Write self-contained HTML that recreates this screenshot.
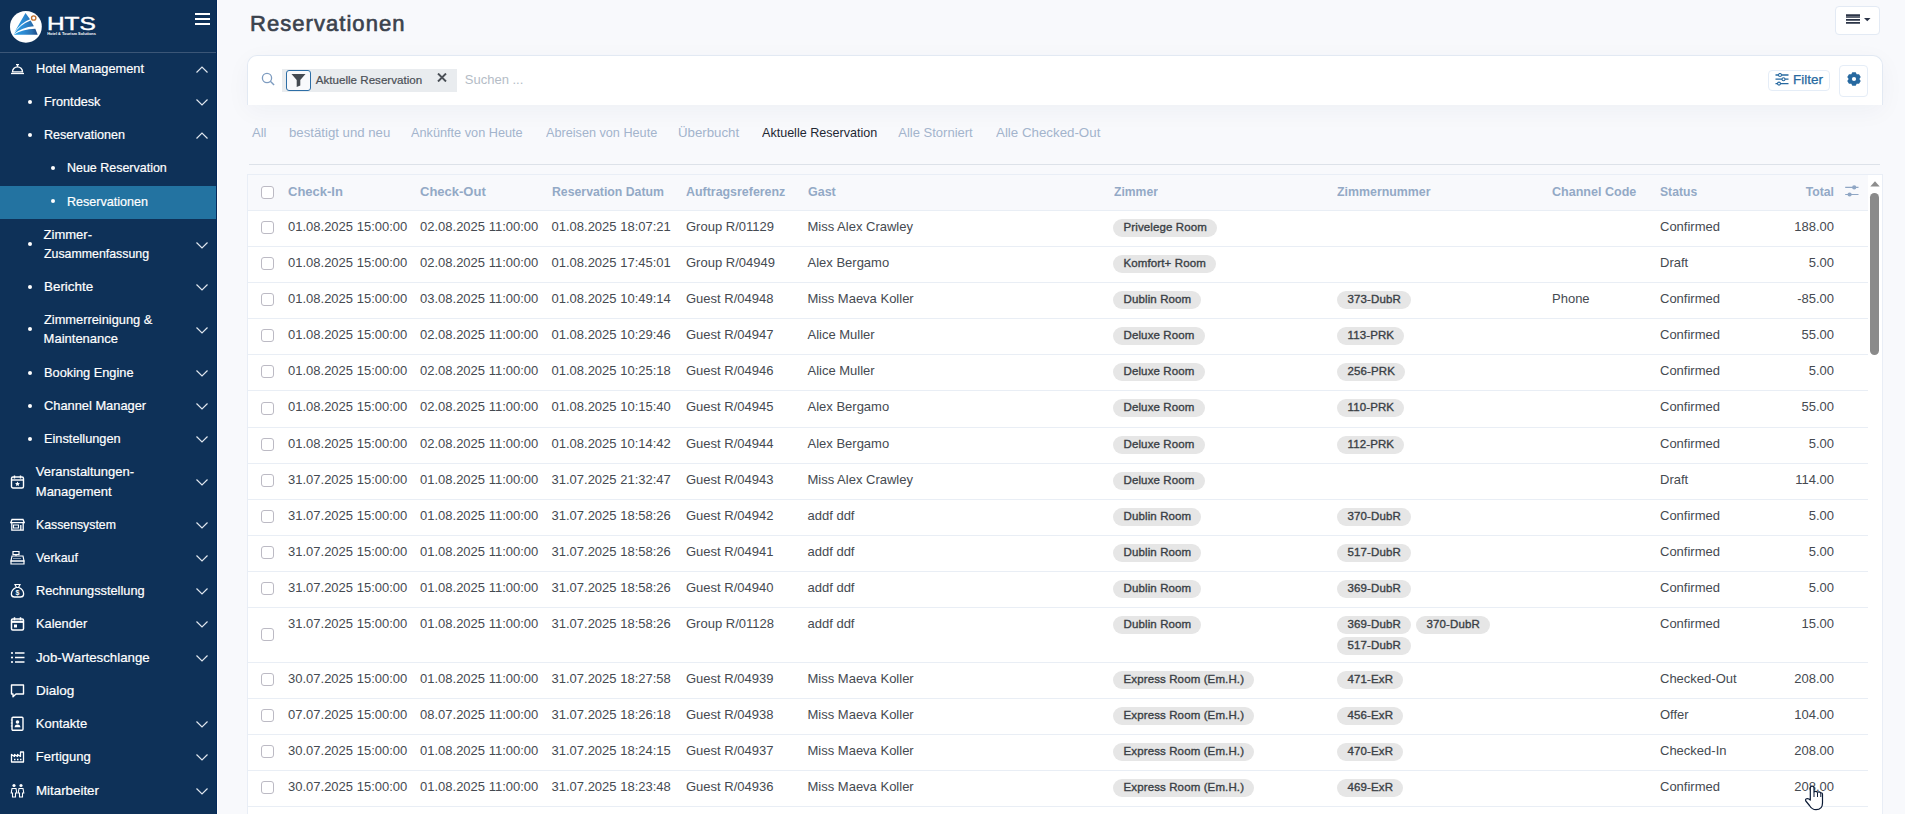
<!DOCTYPE html>
<html><head><meta charset="utf-8"><style>
*{box-sizing:border-box;margin:0;padding:0}
html,body{width:1905px;height:814px;overflow:hidden;background:#f8f9fc;font-family:"Liberation Sans",sans-serif}
.ab{position:absolute}
.t{white-space:nowrap;line-height:1}
.sw{color:#fff;-webkit-text-stroke:0.2px #fff}
.dot{width:4px;height:4px;border-radius:50%;background:#fff}
.th{color:#93a9c6;font-weight:bold;font-size:12.5px}
.td{color:#454a51}
.tab{color:#a3b4cc}
.act{color:#1e2733}
.cb{width:13px;height:13px;border:1px solid #bcbac4;border-radius:3px;background:#fff}
.bd{height:18px;line-height:16.5px;padding:0 10px 0 10.5px;border-radius:9px;background:#e6e6e6;color:#3a3f45;font-size:11.5px;letter-spacing:0.12px;-webkit-text-stroke:0.35px #3a3f45;white-space:nowrap}
</style></head><body>
<div class="ab" id="sidebar" style="left:0;top:0;width:217px;height:814px;background:#0e3158;border-right:1px solid #04295b">
<div class="ab" style="left:0;top:186px;width:216px;height:33px;background:#2373a1"></div><div class="ab" style="left:217px;top:0;width:1px;height:814px;background:#fff"></div>
<div class="ab" style="left:0;top:52px;width:216px;height:1px;background:#3b5677"></div>
<svg class="ab" style="left:0;top:0" width="110" height="50" viewBox="0 0 110 50">
<defs><linearGradient id="lg" x1="13" y1="0" x2="38" y2="0" gradientUnits="userSpaceOnUse"><stop offset="0" stop-color="#27a3e6"/><stop offset="0.45" stop-color="#2d8ad3"/><stop offset="0.75" stop-color="#2a6fae"/><stop offset="1" stop-color="#1b4683"/></linearGradient></defs>
<circle cx="25.9" cy="26.8" r="15.9" fill="#ffffff"/>
<path d="M25.5 12.9 L30 19.3 Q21 22.5 14.3 32.6 Z" fill="url(#lg)"/>
<path d="M30.6 20.5 L33.9 26.3 Q22 27.2 14 34 Q20 24.5 30.6 20.5 Z" fill="url(#lg)"/>
<path d="M35.3 28.8 L37.7 34.8 L13.7 34.8 Q22 29.4 35.3 28.8 Z" fill="url(#lg)"/>
<circle cx="33.7" cy="18" r="2.2" fill="none" stroke="#c2702c" stroke-width="1.3"/>
<text x="47" y="30.1" font-family="Liberation Sans" font-size="19" fill="#fff" stroke="#fff" stroke-width="0.45" textLength="48.8" lengthAdjust="spacingAndGlyphs">HTS</text>
<text x="47.3" y="35" font-family="Liberation Sans" font-weight="bold" font-size="3.3" fill="#fff" textLength="48.5" lengthAdjust="spacingAndGlyphs">Hotel &amp; Tourism Solutions</text>
</svg>
<div class="ab" style="left:195px;top:13px;width:15px;height:2px;background:#fff"></div><div class="ab" style="left:195px;top:18px;width:15px;height:2px;background:#fff"></div><div class="ab" style="left:195px;top:23px;width:15px;height:2px;background:#fff"></div>
<div class="ab t sw" style="left:35.8px;top:62.23px;font-size:13px;transform:scaleX(0.983);transform-origin:0 0">Hotel Management</div><svg class="ab" style="left:9.5px;top:61.400000000000006px" width="15" height="15" viewBox="0 0 15 15"><path d="M1 12.5h13" stroke="#fff" stroke-width="1.3" fill="none"/><path d="M2.5 10.8a5 5 0 0 1 10 0z" stroke="#fff" stroke-width="1.3" fill="none"/><path d="M7.5 4v1.8M6 3.6h3" stroke="#fff" stroke-width="1.2"/></svg><svg class="ab" style="left:196px;top:66.30000000000001px" width="12" height="7" viewBox="0 0 12 7"><path d="M0.5 6.5 L6 1 L11.5 6.5" fill="none" stroke="#dfe6ee" stroke-width="1.2"/></svg><div class="ab t sw" style="left:43.6px;top:95.23px;font-size:13px;transform:scaleX(0.977);transform-origin:0 0">Frontdesk</div><div class="ab dot" style="left:28px;top:99.9px"></div><svg class="ab" style="left:196px;top:99.30000000000001px" width="12" height="7" viewBox="0 0 12 7"><path d="M0.5 0.5 L6 6 L11.5 0.5" fill="none" stroke="#dfe6ee" stroke-width="1.2"/></svg><div class="ab t sw" style="left:43.6px;top:128.24px;font-size:13px;transform:scaleX(0.966);transform-origin:0 0">Reservationen</div><div class="ab dot" style="left:28px;top:132.9px"></div><svg class="ab" style="left:196px;top:132.3px" width="12" height="7" viewBox="0 0 12 7"><path d="M0.5 6.5 L6 1 L11.5 6.5" fill="none" stroke="#dfe6ee" stroke-width="1.2"/></svg><div class="ab t sw" style="left:66.5px;top:161.24px;font-size:13px;transform:scaleX(0.959);transform-origin:0 0">Neue Reservation</div><div class="ab dot" style="left:50.5px;top:165.9px"></div><div class="ab t sw" style="left:66.5px;top:194.74px;font-size:13px;transform:scaleX(0.966);transform-origin:0 0">Reservationen</div><div class="ab dot" style="left:50.5px;top:199.4px"></div><div class="ab t sw" style="left:43.6px;top:227.94px;font-size:13px;transform:scaleX(1.000);transform-origin:0 0">Zimmer-</div><div class="ab t sw" style="left:43.6px;top:247.13px;font-size:13px;transform:scaleX(0.950);transform-origin:0 0">Zusammenfassung</div><div class="ab dot" style="left:28px;top:242.2px"></div><svg class="ab" style="left:196px;top:241.6px" width="12" height="7" viewBox="0 0 12 7"><path d="M0.5 0.5 L6 6 L11.5 0.5" fill="none" stroke="#dfe6ee" stroke-width="1.2"/></svg><div class="ab t sw" style="left:43.6px;top:280.04px;font-size:13px;transform:scaleX(1.030);transform-origin:0 0">Berichte</div><div class="ab dot" style="left:28px;top:284.7px"></div><svg class="ab" style="left:196px;top:284.09999999999997px" width="12" height="7" viewBox="0 0 12 7"><path d="M0.5 0.5 L6 6 L11.5 0.5" fill="none" stroke="#dfe6ee" stroke-width="1.2"/></svg><div class="ab t sw" style="left:43.6px;top:313.04px;font-size:13px;transform:scaleX(0.986);transform-origin:0 0">Zimmerreinigung &amp;</div><div class="ab t sw" style="left:43.6px;top:332.24px;font-size:13px;transform:scaleX(1.000);transform-origin:0 0">Maintenance</div><div class="ab dot" style="left:28px;top:327.3px"></div><svg class="ab" style="left:196px;top:326.7px" width="12" height="7" viewBox="0 0 12 7"><path d="M0.5 0.5 L6 6 L11.5 0.5" fill="none" stroke="#dfe6ee" stroke-width="1.2"/></svg><div class="ab t sw" style="left:43.6px;top:366.24px;font-size:13px;transform:scaleX(0.983);transform-origin:0 0">Booking Engine</div><div class="ab dot" style="left:28px;top:370.9px"></div><svg class="ab" style="left:196px;top:370.29999999999995px" width="12" height="7" viewBox="0 0 12 7"><path d="M0.5 0.5 L6 6 L11.5 0.5" fill="none" stroke="#dfe6ee" stroke-width="1.2"/></svg><div class="ab t sw" style="left:43.6px;top:399.24px;font-size:13px;transform:scaleX(0.988);transform-origin:0 0">Channel Manager</div><div class="ab dot" style="left:28px;top:403.9px"></div><svg class="ab" style="left:196px;top:403.29999999999995px" width="12" height="7" viewBox="0 0 12 7"><path d="M0.5 0.5 L6 6 L11.5 0.5" fill="none" stroke="#dfe6ee" stroke-width="1.2"/></svg><div class="ab t sw" style="left:43.6px;top:432.24px;font-size:13px;transform:scaleX(0.982);transform-origin:0 0">Einstellungen</div><div class="ab dot" style="left:28px;top:436.9px"></div><svg class="ab" style="left:196px;top:436.29999999999995px" width="12" height="7" viewBox="0 0 12 7"><path d="M0.5 0.5 L6 6 L11.5 0.5" fill="none" stroke="#dfe6ee" stroke-width="1.2"/></svg><div class="ab t sw" style="left:35.8px;top:465.34px;font-size:13px;transform:scaleX(1.000);transform-origin:0 0">Veranstaltungen-</div><div class="ab t sw" style="left:35.8px;top:484.54px;font-size:13px;transform:scaleX(1.000);transform-origin:0 0">Management</div><svg class="ab" style="left:9.5px;top:474.1px" width="15" height="15" viewBox="0 0 15 15"><rect x="1.5" y="3" width="12" height="11" rx="1.5" stroke="#fff" stroke-width="1.4" fill="none"/><path d="M1.5 6h12" stroke="#fff" stroke-width="1.4"/><path d="M4.5 1.5v3M10.5 1.5v3" stroke="#fff" stroke-width="1.4"/><path d="M7.5 7.6l.8 1.5 1.6.2-1.2 1.1.3 1.6-1.5-.8-1.5.8.3-1.6-1.2-1.1 1.6-.2z" fill="#fff"/></svg><svg class="ab" style="left:196px;top:479.0px" width="12" height="7" viewBox="0 0 12 7"><path d="M0.5 0.5 L6 6 L11.5 0.5" fill="none" stroke="#dfe6ee" stroke-width="1.2"/></svg><div class="ab t sw" style="left:35.8px;top:517.74px;font-size:13px;transform:scaleX(0.945);transform-origin:0 0">Kassensystem</div><svg class="ab" style="left:9.5px;top:516.9px" width="15" height="15" viewBox="0 0 15 15"><path d="M2 2.5h11l1.3 3.2H.7z" stroke="#fff" stroke-width="1.3" fill="none"/><path d="M1.8 5.7v7.5h11.4V5.7" stroke="#fff" stroke-width="1.3" fill="none"/><path d="M3.5 8h5v3h-5z" stroke="#fff" stroke-width="1.1" fill="none"/><path d="M10.8 8v5" stroke="#fff" stroke-width="1.3"/></svg><svg class="ab" style="left:196px;top:521.8px" width="12" height="7" viewBox="0 0 12 7"><path d="M0.5 0.5 L6 6 L11.5 0.5" fill="none" stroke="#dfe6ee" stroke-width="1.2"/></svg><div class="ab t sw" style="left:35.8px;top:550.74px;font-size:13px;transform:scaleX(0.949);transform-origin:0 0">Verkauf</div><svg class="ab" style="left:9.5px;top:549.9px" width="15" height="15" viewBox="0 0 15 15"><path d="M3 1.5h6v3H3z" stroke="#fff" stroke-width="1.2" fill="none"/><path d="M6 4.5v1.5" stroke="#fff" stroke-width="1.2"/><path d="M2 6h11l1 5H1z" stroke="#fff" stroke-width="1.2" fill="none"/><path d="M1 11h13v3H1z" stroke="#fff" stroke-width="1.2" fill="none"/><path d="M3.5 8.5h8" stroke="#fff" stroke-width="1" stroke-dasharray="1 1"/></svg><svg class="ab" style="left:196px;top:554.8px" width="12" height="7" viewBox="0 0 12 7"><path d="M0.5 0.5 L6 6 L11.5 0.5" fill="none" stroke="#dfe6ee" stroke-width="1.2"/></svg><div class="ab t sw" style="left:35.8px;top:583.74px;font-size:13px;transform:scaleX(0.982);transform-origin:0 0">Rechnungsstellung</div><svg class="ab" style="left:9.5px;top:582.9px" width="15" height="15" viewBox="0 0 15 15"><path d="M5 1.5h5l-1.5 3h-2z" stroke="#fff" stroke-width="1.2" fill="none"/><path d="M6 4.5C3 6 1 9 1.5 12c.3 1.5 1.5 2 3 2h6c1.5 0 2.7-.5 3-2 .5-3-1.5-6-4.5-7.5" stroke="#fff" stroke-width="1.3" fill="none"/><text x="7.5" y="12.2" font-size="7" fill="#fff" text-anchor="middle" font-family="Liberation Sans" font-weight="bold">$</text></svg><svg class="ab" style="left:196px;top:587.8px" width="12" height="7" viewBox="0 0 12 7"><path d="M0.5 0.5 L6 6 L11.5 0.5" fill="none" stroke="#dfe6ee" stroke-width="1.2"/></svg><div class="ab t sw" style="left:35.8px;top:616.94px;font-size:13px;transform:scaleX(0.984);transform-origin:0 0">Kalender</div><svg class="ab" style="left:9.5px;top:616.1px" width="15" height="15" viewBox="0 0 15 15"><rect x="1.5" y="3" width="12" height="11" rx="1.2" stroke="#fff" stroke-width="1.5" fill="none"/><path d="M1.5 5.8h12" stroke="#fff" stroke-width="2.2"/><path d="M4.5 1.2v3M10.5 1.2v3" stroke="#fff" stroke-width="1.5"/><rect x="4" y="8.5" width="3" height="3" fill="#fff"/></svg><svg class="ab" style="left:196px;top:621.0px" width="12" height="7" viewBox="0 0 12 7"><path d="M0.5 0.5 L6 6 L11.5 0.5" fill="none" stroke="#dfe6ee" stroke-width="1.2"/></svg><div class="ab t sw" style="left:35.8px;top:650.74px;font-size:13px;transform:scaleX(1.019);transform-origin:0 0">Job-Warteschlange</div><svg class="ab" style="left:9.5px;top:649.9px" width="15" height="15" viewBox="0 0 15 15"><circle cx="2" cy="3" r="1.1" fill="#fff"/><circle cx="2" cy="7.5" r="1.1" fill="#fff"/><circle cx="2" cy="12" r="1.1" fill="#fff"/><path d="M5 3h9.5M5 7.5h9.5M5 12h9.5" stroke="#fff" stroke-width="1.4"/></svg><svg class="ab" style="left:196px;top:654.8px" width="12" height="7" viewBox="0 0 12 7"><path d="M0.5 0.5 L6 6 L11.5 0.5" fill="none" stroke="#dfe6ee" stroke-width="1.2"/></svg><div class="ab t sw" style="left:35.8px;top:684.03px;font-size:13px;transform:scaleX(1.040);transform-origin:0 0">Dialog</div><svg class="ab" style="left:9.5px;top:683.1999999999999px" width="15" height="15" viewBox="0 0 15 15"><path d="M1.5 2h12v9H6l-3 2.8V11H1.5z" stroke="#fff" stroke-width="1.4" fill="none" stroke-linejoin="round"/></svg><div class="ab t sw" style="left:35.8px;top:717.24px;font-size:13px;transform:scaleX(1.000);transform-origin:0 0">Kontakte</div><svg class="ab" style="left:9.5px;top:716.4px" width="15" height="15" viewBox="0 0 15 15"><rect x="2" y="1.2" width="11" height="13" rx="1" stroke="#fff" stroke-width="1.4" fill="none"/><circle cx="7.5" cy="6" r="1.8" fill="#fff"/><path d="M4.5 11.2c.4-2 1.5-2.7 3-2.7s2.6.7 3 2.7z" fill="#fff"/><path d="M0.8 4h1.6M0.8 7h1.6M0.8 10h1.6" stroke="#fff" stroke-width="1"/></svg><svg class="ab" style="left:196px;top:721.3px" width="12" height="7" viewBox="0 0 12 7"><path d="M0.5 0.5 L6 6 L11.5 0.5" fill="none" stroke="#dfe6ee" stroke-width="1.2"/></svg><div class="ab t sw" style="left:35.8px;top:750.24px;font-size:13px;transform:scaleX(1.000);transform-origin:0 0">Fertigung</div><svg class="ab" style="left:9.5px;top:749.4px" width="15" height="15" viewBox="0 0 15 15"><path d="M1.5 13V5.5l3 2v-2l3 2v-2l3 2V3h3v10z" stroke="#fff" stroke-width="1.3" fill="none" stroke-linejoin="round"/><path d="M4 10.5h1.5M7 10.5h1.5M10 10.5h1.5" stroke="#fff" stroke-width="1.3"/></svg><svg class="ab" style="left:196px;top:754.3px" width="12" height="7" viewBox="0 0 12 7"><path d="M0.5 0.5 L6 6 L11.5 0.5" fill="none" stroke="#dfe6ee" stroke-width="1.2"/></svg><div class="ab t sw" style="left:35.8px;top:783.74px;font-size:13px;transform:scaleX(1.025);transform-origin:0 0">Mitarbeiter</div><svg class="ab" style="left:9.5px;top:782.9px" width="15" height="15" viewBox="0 0 15 15"><circle cx="4" cy="2.5" r="1.6" fill="#fff"/><circle cx="11" cy="2.5" r="1.6" fill="#fff"/><path d="M2 5.5h4l.8 4.5H5.5v4h-3v-4H1.2z" stroke="#fff" stroke-width="1.1" fill="none"/><path d="M9 5.5h4l.8 4.5h-1.3v4h-3v-4H8.2z" stroke="#fff" stroke-width="1.1" fill="none"/></svg><svg class="ab" style="left:196px;top:787.8px" width="12" height="7" viewBox="0 0 12 7"><path d="M0.5 0.5 L6 6 L11.5 0.5" fill="none" stroke="#dfe6ee" stroke-width="1.2"/></svg>
</div>
<div class="ab t" style="left:250px;top:12.89px;font-size:22px;letter-spacing:1.05px;-webkit-text-stroke:0.65px #3b424d;color:#3b424d">Reservationen</div>
<div class="ab" style="left:1834.5px;top:6px;width:45px;height:28.5px;background:#fff;border:1px solid #e3eaf4;border-radius:4px"></div>
<svg class="ab" style="left:1846px;top:14px" width="26" height="10" viewBox="0 0 26 10"><path d="M0 0.2h14v1.8H0zM0 2.2h14v1.6H0zM0 5h14v1.8H0zM0 8h14v1.8H0z" fill="#2b3447"/><path d="M18 4h6.5l-3.25 3.2z" fill="#2b3447"/></svg>
<div class="ab" style="left:246.5px;top:55px;width:1636px;height:50px;background:#fff;border:1px solid #e2e9f3;border-bottom:none;border-radius:10px 10px 0 0;box-shadow:0 6px 24px rgba(30,50,90,0.045)"></div>
<svg class="ab" style="left:261px;top:72px" width="15" height="15" viewBox="0 0 15 15"><circle cx="6" cy="6" r="4.6" fill="none" stroke="#7e9cc0" stroke-width="1.3"/><path d="M9.3 9.3l3.8 3.8" stroke="#7e9cc0" stroke-width="1.4"/></svg>
<div class="ab" style="left:282px;top:69px;width:175px;height:23px;background:#e9ecef"></div>
<div class="ab" style="left:286px;top:70px;width:25px;height:21px;background:#f8f9fc;border:1.6px solid #2d6ea6;border-radius:3px"></div>
<svg class="ab" style="left:291px;top:73px" width="15" height="14" viewBox="0 0 15 14"><path d="M0.5 1h14l-5.2 6v5.6l-3.6 1.4V7z" fill="#444a52"/></svg>
<div class="ab t " style="left:315.8px;top:74.00px;font-size:11.6px;color:#4a4f56;-webkit-text-stroke:0.2px #4a4f56">Aktuelle Reservation</div>
<svg class="ab" style="left:437px;top:73px" width="10" height="9" viewBox="0 0 10 9"><path d="M1 0.5l8 8M9 0.5l-8 8" stroke="#4a4f56" stroke-width="1.9"/></svg>
<div class="ab t " style="left:464.8px;top:73.23px;font-size:13px;color:#b4bcc6">Suchen ...</div>
<div class="ab" style="left:1767.5px;top:70px;width:62px;height:21px;background:#fff;border:1px solid #e5edf7;border-radius:4px"></div>
<svg class="ab" style="left:1775px;top:73px" width="14" height="13" viewBox="0 0 14 13"><path d="M0.5 2h13M0.5 6.2h13M0.5 10.6h13" stroke="#2769a0" stroke-width="1.3"/><circle cx="5" cy="2" r="1.5" fill="#fff" stroke="#2769a0" stroke-width="1.1"/><circle cx="8.5" cy="6.2" r="1.5" fill="#fff" stroke="#2769a0" stroke-width="1.1"/><circle cx="4" cy="10.6" r="1.5" fill="#fff" stroke="#2769a0" stroke-width="1.1"/></svg>
<div class="ab t " style="left:1793px;top:72.58px;font-size:13.5px;color:#2769a0;-webkit-text-stroke:0.25px #2769a0">Filter</div>
<div class="ab" style="left:1839px;top:65px;width:29px;height:32px;background:#fff;border:1px solid #e5edf7;border-radius:4px"></div>
<svg class="ab" style="left:1846.8px;top:72px" width="14" height="14" viewBox="0 0 24 24"><path fill="#2769a0" d="M7.40 4.03 L9.10 0.36 L14.90 0.36 L16.60 4.03 L16.60 4.03 L20.63 3.66 L23.54 8.69 L21.20 12.00 L21.20 12.00 L23.54 15.31 L20.63 20.34 L16.60 19.97 L16.60 19.97 L14.90 23.64 L9.10 23.64 L7.40 19.97 L7.40 19.97 L3.37 20.34 L0.46 15.31 L2.80 12.00 L2.80 12.00 L0.46 8.69 L3.37 3.66 L7.40 4.03Z"/><circle cx="12" cy="12" r="3.6" fill="#fff"/></svg>
<div class="ab t tab" style="left:252px;top:125.73px;font-size:13px;transform:scaleX(1.0);transform-origin:0 0">All</div><div class="ab t tab" style="left:288.5px;top:125.73px;font-size:13px;transform:scaleX(1.015);transform-origin:0 0">bestätigt und neu</div><div class="ab t tab" style="left:411.3px;top:125.73px;font-size:13px;transform:scaleX(0.978);transform-origin:0 0">Ankünfte von Heute</div><div class="ab t tab" style="left:545.5px;top:125.73px;font-size:13px;transform:scaleX(0.974);transform-origin:0 0">Abreisen von Heute</div><div class="ab t tab" style="left:677.5px;top:125.73px;font-size:13px;transform:scaleX(1.02);transform-origin:0 0">Überbucht</div><div class="ab t tab act" style="left:761.5px;top:125.73px;font-size:13px;transform:scaleX(0.966);transform-origin:0 0">Aktuelle Reservation</div><div class="ab t tab" style="left:898.3px;top:125.73px;font-size:13px;transform:scaleX(1.0);transform-origin:0 0">Alle Storniert</div><div class="ab t tab" style="left:995.5px;top:125.73px;font-size:13px;transform:scaleX(1.024);transform-origin:0 0">Alle Checked-Out</div>
<div class="ab" style="left:249px;top:164px;width:1631px;height:1.3px;background:#dde2e9"></div>
<div class="ab" style="left:247px;top:174px;width:1636px;height:680px;background:#fff;border:1px solid #e9eef6"></div>
<div class="ab" style="left:248px;top:175px;width:1619.5px;height:35px;background:#f8f9fc"></div>
<div class="ab t th" style="left:288px;top:185.33px;font-size:13px;transform:scaleX(1.0000);transform-origin:0 0">Check-In</div><div class="ab t th" style="left:420px;top:185.33px;font-size:13px;transform:scaleX(1.0000);transform-origin:0 0">Check-Out</div><div class="ab t th" style="left:551.5px;top:185.33px;font-size:13px;transform:scaleX(0.9447);transform-origin:0 0">Reservation Datum</div><div class="ab t th" style="left:686px;top:185.33px;font-size:13px;transform:scaleX(0.9546);transform-origin:0 0">Auftragsreferenz</div><div class="ab t th" style="left:807.5px;top:185.33px;font-size:13px;transform:scaleX(0.9614);transform-origin:0 0">Gast</div><div class="ab t th" style="left:1113.5px;top:185.33px;font-size:13px;transform:scaleX(0.9347);transform-origin:0 0">Zimmer</div><div class="ab t th" style="left:1337px;top:185.33px;font-size:13px;transform:scaleX(0.9523);transform-origin:0 0">Zimmernummer</div><div class="ab t th" style="left:1552px;top:185.33px;font-size:13px;transform:scaleX(0.9646);transform-origin:0 0">Channel Code</div><div class="ab t th" style="left:1660px;top:185.33px;font-size:13px;transform:scaleX(0.9367);transform-origin:0 0">Status</div><div class="ab t th" style="left:1734px;width:100px;text-align:right;top:185.33px;font-size:13px;transform:scaleX(0.94);transform-origin:100% 0">Total</div><div class="ab cb" style="left:261px;top:186px"></div><svg class="ab" style="left:1845px;top:185px" width="14" height="12" viewBox="0 0 14 12"><path d="M0.2 2.4h13.3M0.2 9.5h13.3" stroke="#8fa6c4" stroke-width="1.1"/><circle cx="9.2" cy="2.4" r="2.1" fill="#8fa6c4"/><circle cx="4.6" cy="9.5" r="2.1" fill="#8fa6c4"/></svg><div class="ab t td" style="left:288px;top:220.04px;font-size:13px;">01.08.2025 15:00:00</div><div class="ab t td" style="left:420px;top:220.04px;font-size:13px;">02.08.2025 11:00:00</div><div class="ab t td" style="left:551.5px;top:220.04px;font-size:13px;">01.08.2025 18:07:21</div><div class="ab t td" style="left:686px;top:220.04px;font-size:13px;">Group R/01129</div><div class="ab t td" style="left:807.5px;top:220.04px;font-size:13px;">Miss Alex Crawley</div><div class="ab bd" style="left:1113px;top:219.10px">Privelege Room</div><div class="ab t td" style="left:1660px;top:220.04px;font-size:13px;">Confirmed</div><div class="ab t td" style="left:1734px;width:100px;text-align:right;top:220.04px;font-size:13px">188.00</div><div class="ab cb" style="left:261px;top:221px"></div><div class="ab t td" style="left:288px;top:256.04px;font-size:13px;">01.08.2025 15:00:00</div><div class="ab t td" style="left:420px;top:256.04px;font-size:13px;">02.08.2025 11:00:00</div><div class="ab t td" style="left:551.5px;top:256.04px;font-size:13px;">01.08.2025 17:45:01</div><div class="ab t td" style="left:686px;top:256.04px;font-size:13px;">Group R/04949</div><div class="ab t td" style="left:807.5px;top:256.04px;font-size:13px;">Alex Bergamo</div><div class="ab bd" style="left:1113px;top:255.10px">Komfort+ Room</div><div class="ab t td" style="left:1660px;top:256.04px;font-size:13px;">Draft</div><div class="ab t td" style="left:1734px;width:100px;text-align:right;top:256.04px;font-size:13px">5.00</div><div class="ab cb" style="left:261px;top:257px"></div><div class="ab t td" style="left:288px;top:292.04px;font-size:13px;">01.08.2025 15:00:00</div><div class="ab t td" style="left:420px;top:292.04px;font-size:13px;">03.08.2025 11:00:00</div><div class="ab t td" style="left:551.5px;top:292.04px;font-size:13px;">01.08.2025 10:49:14</div><div class="ab t td" style="left:686px;top:292.04px;font-size:13px;">Guest R/04948</div><div class="ab t td" style="left:807.5px;top:292.04px;font-size:13px;">Miss Maeva Koller</div><div class="ab bd" style="left:1113px;top:291.10px">Dublin Room</div><div class="ab bd" style="left:1337px;top:291.10px">373-DubR</div><div class="ab t td" style="left:1552px;top:292.04px;font-size:13px;">Phone</div><div class="ab t td" style="left:1660px;top:292.04px;font-size:13px;">Confirmed</div><div class="ab t td" style="left:1734px;width:100px;text-align:right;top:292.04px;font-size:13px">-85.00</div><div class="ab cb" style="left:261px;top:293px"></div><div class="ab t td" style="left:288px;top:328.04px;font-size:13px;">01.08.2025 15:00:00</div><div class="ab t td" style="left:420px;top:328.04px;font-size:13px;">02.08.2025 11:00:00</div><div class="ab t td" style="left:551.5px;top:328.04px;font-size:13px;">01.08.2025 10:29:46</div><div class="ab t td" style="left:686px;top:328.04px;font-size:13px;">Guest R/04947</div><div class="ab t td" style="left:807.5px;top:328.04px;font-size:13px;">Alice Muller</div><div class="ab bd" style="left:1113px;top:327.10px">Deluxe Room</div><div class="ab bd" style="left:1337px;top:327.10px">113-PRK</div><div class="ab t td" style="left:1660px;top:328.04px;font-size:13px;">Confirmed</div><div class="ab t td" style="left:1734px;width:100px;text-align:right;top:328.04px;font-size:13px">55.00</div><div class="ab cb" style="left:261px;top:329px"></div><div class="ab t td" style="left:288px;top:364.04px;font-size:13px;">01.08.2025 15:00:00</div><div class="ab t td" style="left:420px;top:364.04px;font-size:13px;">02.08.2025 11:00:00</div><div class="ab t td" style="left:551.5px;top:364.04px;font-size:13px;">01.08.2025 10:25:18</div><div class="ab t td" style="left:686px;top:364.04px;font-size:13px;">Guest R/04946</div><div class="ab t td" style="left:807.5px;top:364.04px;font-size:13px;">Alice Muller</div><div class="ab bd" style="left:1113px;top:363.10px">Deluxe Room</div><div class="ab bd" style="left:1337px;top:363.10px">256-PRK</div><div class="ab t td" style="left:1660px;top:364.04px;font-size:13px;">Confirmed</div><div class="ab t td" style="left:1734px;width:100px;text-align:right;top:364.04px;font-size:13px">5.00</div><div class="ab cb" style="left:261px;top:365px"></div><div class="ab t td" style="left:288px;top:400.04px;font-size:13px;">01.08.2025 15:00:00</div><div class="ab t td" style="left:420px;top:400.04px;font-size:13px;">02.08.2025 11:00:00</div><div class="ab t td" style="left:551.5px;top:400.04px;font-size:13px;">01.08.2025 10:15:40</div><div class="ab t td" style="left:686px;top:400.04px;font-size:13px;">Guest R/04945</div><div class="ab t td" style="left:807.5px;top:400.04px;font-size:13px;">Alex Bergamo</div><div class="ab bd" style="left:1113px;top:399.10px">Deluxe Room</div><div class="ab bd" style="left:1337px;top:399.10px">110-PRK</div><div class="ab t td" style="left:1660px;top:400.04px;font-size:13px;">Confirmed</div><div class="ab t td" style="left:1734px;width:100px;text-align:right;top:400.04px;font-size:13px">55.00</div><div class="ab cb" style="left:261px;top:402px"></div><div class="ab t td" style="left:288px;top:437.04px;font-size:13px;">01.08.2025 15:00:00</div><div class="ab t td" style="left:420px;top:437.04px;font-size:13px;">02.08.2025 11:00:00</div><div class="ab t td" style="left:551.5px;top:437.04px;font-size:13px;">01.08.2025 10:14:42</div><div class="ab t td" style="left:686px;top:437.04px;font-size:13px;">Guest R/04944</div><div class="ab t td" style="left:807.5px;top:437.04px;font-size:13px;">Alex Bergamo</div><div class="ab bd" style="left:1113px;top:436.10px">Deluxe Room</div><div class="ab bd" style="left:1337px;top:436.10px">112-PRK</div><div class="ab t td" style="left:1660px;top:437.04px;font-size:13px;">Confirmed</div><div class="ab t td" style="left:1734px;width:100px;text-align:right;top:437.04px;font-size:13px">5.00</div><div class="ab cb" style="left:261px;top:438px"></div><div class="ab t td" style="left:288px;top:473.04px;font-size:13px;">31.07.2025 15:00:00</div><div class="ab t td" style="left:420px;top:473.04px;font-size:13px;">01.08.2025 11:00:00</div><div class="ab t td" style="left:551.5px;top:473.04px;font-size:13px;">31.07.2025 21:32:47</div><div class="ab t td" style="left:686px;top:473.04px;font-size:13px;">Guest R/04943</div><div class="ab t td" style="left:807.5px;top:473.04px;font-size:13px;">Miss Alex Crawley</div><div class="ab bd" style="left:1113px;top:472.10px">Deluxe Room</div><div class="ab t td" style="left:1660px;top:473.04px;font-size:13px;">Draft</div><div class="ab t td" style="left:1734px;width:100px;text-align:right;top:473.04px;font-size:13px">114.00</div><div class="ab cb" style="left:261px;top:474px"></div><div class="ab t td" style="left:288px;top:509.03px;font-size:13px;">31.07.2025 15:00:00</div><div class="ab t td" style="left:420px;top:509.03px;font-size:13px;">01.08.2025 11:00:00</div><div class="ab t td" style="left:551.5px;top:509.03px;font-size:13px;">31.07.2025 18:58:26</div><div class="ab t td" style="left:686px;top:509.03px;font-size:13px;">Guest R/04942</div><div class="ab t td" style="left:807.5px;top:509.03px;font-size:13px;">addf ddf</div><div class="ab bd" style="left:1113px;top:508.10px">Dublin Room</div><div class="ab bd" style="left:1337px;top:508.10px">370-DubR</div><div class="ab t td" style="left:1660px;top:509.03px;font-size:13px;">Confirmed</div><div class="ab t td" style="left:1734px;width:100px;text-align:right;top:509.03px;font-size:13px">5.00</div><div class="ab cb" style="left:261px;top:510px"></div><div class="ab t td" style="left:288px;top:545.03px;font-size:13px;">31.07.2025 15:00:00</div><div class="ab t td" style="left:420px;top:545.03px;font-size:13px;">01.08.2025 11:00:00</div><div class="ab t td" style="left:551.5px;top:545.03px;font-size:13px;">31.07.2025 18:58:26</div><div class="ab t td" style="left:686px;top:545.03px;font-size:13px;">Guest R/04941</div><div class="ab t td" style="left:807.5px;top:545.03px;font-size:13px;">addf ddf</div><div class="ab bd" style="left:1113px;top:544.10px">Dublin Room</div><div class="ab bd" style="left:1337px;top:544.10px">517-DubR</div><div class="ab t td" style="left:1660px;top:545.03px;font-size:13px;">Confirmed</div><div class="ab t td" style="left:1734px;width:100px;text-align:right;top:545.03px;font-size:13px">5.00</div><div class="ab cb" style="left:261px;top:546px"></div><div class="ab t td" style="left:288px;top:581.03px;font-size:13px;">31.07.2025 15:00:00</div><div class="ab t td" style="left:420px;top:581.03px;font-size:13px;">01.08.2025 11:00:00</div><div class="ab t td" style="left:551.5px;top:581.03px;font-size:13px;">31.07.2025 18:58:26</div><div class="ab t td" style="left:686px;top:581.03px;font-size:13px;">Guest R/04940</div><div class="ab t td" style="left:807.5px;top:581.03px;font-size:13px;">addf ddf</div><div class="ab bd" style="left:1113px;top:580.10px">Dublin Room</div><div class="ab bd" style="left:1337px;top:580.10px">369-DubR</div><div class="ab t td" style="left:1660px;top:581.03px;font-size:13px;">Confirmed</div><div class="ab t td" style="left:1734px;width:100px;text-align:right;top:581.03px;font-size:13px">5.00</div><div class="ab cb" style="left:261px;top:582px"></div><div class="ab t td" style="left:288px;top:617.03px;font-size:13px;">31.07.2025 15:00:00</div><div class="ab t td" style="left:420px;top:617.03px;font-size:13px;">01.08.2025 11:00:00</div><div class="ab t td" style="left:551.5px;top:617.03px;font-size:13px;">31.07.2025 18:58:26</div><div class="ab t td" style="left:686px;top:617.03px;font-size:13px;">Group R/01128</div><div class="ab t td" style="left:807.5px;top:617.03px;font-size:13px;">addf ddf</div><div class="ab bd" style="left:1113px;top:616.10px">Dublin Room</div><div class="ab bd" style="left:1337px;top:616.10px">369-DubR</div><div class="ab bd" style="left:1416px;top:616.10px">370-DubR</div><div class="ab bd" style="left:1337px;top:637.10px">517-DubR</div><div class="ab t td" style="left:1660px;top:617.03px;font-size:13px;">Confirmed</div><div class="ab t td" style="left:1734px;width:100px;text-align:right;top:617.03px;font-size:13px">15.00</div><div class="ab cb" style="left:261px;top:628px"></div><div class="ab t td" style="left:288px;top:672.03px;font-size:13px;">30.07.2025 15:00:00</div><div class="ab t td" style="left:420px;top:672.03px;font-size:13px;">01.08.2025 11:00:00</div><div class="ab t td" style="left:551.5px;top:672.03px;font-size:13px;">31.07.2025 18:27:58</div><div class="ab t td" style="left:686px;top:672.03px;font-size:13px;">Guest R/04939</div><div class="ab t td" style="left:807.5px;top:672.03px;font-size:13px;">Miss Maeva Koller</div><div class="ab bd" style="left:1113px;top:671.10px">Express Room (Em.H.)</div><div class="ab bd" style="left:1337px;top:671.10px">471-ExR</div><div class="ab t td" style="left:1660px;top:672.03px;font-size:13px;">Checked-Out</div><div class="ab t td" style="left:1734px;width:100px;text-align:right;top:672.03px;font-size:13px">208.00</div><div class="ab cb" style="left:261px;top:673px"></div><div class="ab t td" style="left:288px;top:708.03px;font-size:13px;">07.07.2025 15:00:00</div><div class="ab t td" style="left:420px;top:708.03px;font-size:13px;">08.07.2025 11:00:00</div><div class="ab t td" style="left:551.5px;top:708.03px;font-size:13px;">31.07.2025 18:26:18</div><div class="ab t td" style="left:686px;top:708.03px;font-size:13px;">Guest R/04938</div><div class="ab t td" style="left:807.5px;top:708.03px;font-size:13px;">Miss Maeva Koller</div><div class="ab bd" style="left:1113px;top:707.10px">Express Room (Em.H.)</div><div class="ab bd" style="left:1337px;top:707.10px">456-ExR</div><div class="ab t td" style="left:1660px;top:708.03px;font-size:13px;">Offer</div><div class="ab t td" style="left:1734px;width:100px;text-align:right;top:708.03px;font-size:13px">104.00</div><div class="ab cb" style="left:261px;top:709px"></div><div class="ab t td" style="left:288px;top:744.03px;font-size:13px;">30.07.2025 15:00:00</div><div class="ab t td" style="left:420px;top:744.03px;font-size:13px;">01.08.2025 11:00:00</div><div class="ab t td" style="left:551.5px;top:744.03px;font-size:13px;">31.07.2025 18:24:15</div><div class="ab t td" style="left:686px;top:744.03px;font-size:13px;">Guest R/04937</div><div class="ab t td" style="left:807.5px;top:744.03px;font-size:13px;">Miss Maeva Koller</div><div class="ab bd" style="left:1113px;top:743.10px">Express Room (Em.H.)</div><div class="ab bd" style="left:1337px;top:743.10px">470-ExR</div><div class="ab t td" style="left:1660px;top:744.03px;font-size:13px;">Checked-In</div><div class="ab t td" style="left:1734px;width:100px;text-align:right;top:744.03px;font-size:13px">208.00</div><div class="ab cb" style="left:261px;top:745px"></div><div class="ab t td" style="left:288px;top:780.03px;font-size:13px;">30.07.2025 15:00:00</div><div class="ab t td" style="left:420px;top:780.03px;font-size:13px;">01.08.2025 11:00:00</div><div class="ab t td" style="left:551.5px;top:780.03px;font-size:13px;">31.07.2025 18:23:48</div><div class="ab t td" style="left:686px;top:780.03px;font-size:13px;">Guest R/04936</div><div class="ab t td" style="left:807.5px;top:780.03px;font-size:13px;">Miss Maeva Koller</div><div class="ab bd" style="left:1113px;top:779.10px">Express Room (Em.H.)</div><div class="ab bd" style="left:1337px;top:779.10px">469-ExR</div><div class="ab t td" style="left:1660px;top:780.03px;font-size:13px;">Confirmed</div><div class="ab t td" style="left:1734px;width:100px;text-align:right;top:780.03px;font-size:13px">208.00</div><div class="ab cb" style="left:261px;top:781px"></div><div class="ab" style="left:247px;top:210px;width:1621px;height:1px;background:#e9eef5"></div><div class="ab" style="left:247px;top:246px;width:1621px;height:1px;background:#e9eef5"></div><div class="ab" style="left:247px;top:282px;width:1621px;height:1px;background:#e9eef5"></div><div class="ab" style="left:247px;top:318px;width:1621px;height:1px;background:#e9eef5"></div><div class="ab" style="left:247px;top:354px;width:1621px;height:1px;background:#e9eef5"></div><div class="ab" style="left:247px;top:390px;width:1621px;height:1px;background:#e9eef5"></div><div class="ab" style="left:247px;top:427px;width:1621px;height:1px;background:#e9eef5"></div><div class="ab" style="left:247px;top:463px;width:1621px;height:1px;background:#e9eef5"></div><div class="ab" style="left:247px;top:499px;width:1621px;height:1px;background:#e9eef5"></div><div class="ab" style="left:247px;top:535px;width:1621px;height:1px;background:#e9eef5"></div><div class="ab" style="left:247px;top:571px;width:1621px;height:1px;background:#e9eef5"></div><div class="ab" style="left:247px;top:607px;width:1621px;height:1px;background:#e9eef5"></div><div class="ab" style="left:247px;top:662px;width:1621px;height:1px;background:#e9eef5"></div><div class="ab" style="left:247px;top:698px;width:1621px;height:1px;background:#e9eef5"></div><div class="ab" style="left:247px;top:734px;width:1621px;height:1px;background:#e9eef5"></div><div class="ab" style="left:247px;top:770px;width:1621px;height:1px;background:#e9eef5"></div><div class="ab" style="left:247px;top:806px;width:1621px;height:1px;background:#e9eef5"></div>
<svg class="ab" style="left:1869.5px;top:180.5px" width="10" height="6" viewBox="0 0 10 6"><path d="M0.3 5.6h9.4L5 0.3z" fill="#8d8d8d"/></svg>
<div class="ab" style="left:1870px;top:193px;width:9px;height:162px;background:#8a8a8a;border-radius:5px"></div>
<svg class="ab" style="left:1804px;top:785px" width="21" height="27" viewBox="0 0 21 27"><path d="M6.3 15 V3 Q6.3 1.2 8.15 1.2 Q10 1.2 10 3 V6.8 Q12 5.8 13.5 7.2 Q15.5 6.3 16.8 7.8 Q18.5 7.5 18.5 9.5 V18 Q18.5 24.7 12 24.7 Q8 24.7 5.5 20.5 L1.8 16 Q1 14.5 2.5 13.8 Q4.5 13.2 6.3 15 Z" fill="#fff" stroke="#0c1b36" stroke-width="1.2" stroke-linejoin="round"/><path d="M10 7 V12 M13.5 7.5 V12 M16.8 8 V12" stroke="#0c1b36" stroke-width="1"/></svg>
</body></html>
